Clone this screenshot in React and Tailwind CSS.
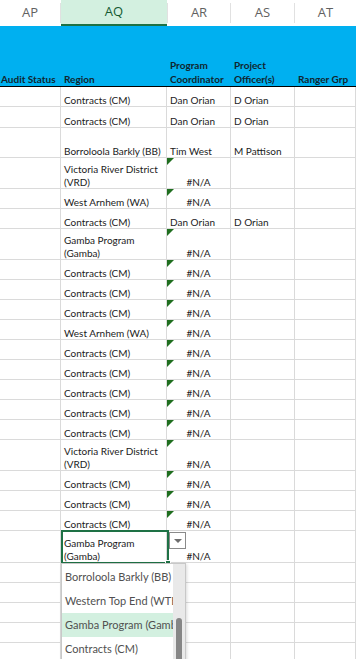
import React from 'react';

const grid = 'grid grid-cols-[61px_106px_64px_64px_61px]';

// rows of the sheet: h = row height incl. bottom gridline
const rows = [
  { h: 20, region: ['Contracts (CM)'], coord: 'Dan Orian', officer: 'D Orian' },
  { h: 21, region: ['Contracts (CM)'], coord: 'Dan Orian', officer: 'D Orian' },
  { h: 30, region: ['Borroloola Barkly (BB)'], coord: 'Tim West', officer: 'M Pattison' },
  { h: 31, region: ['Victoria River District', '(VRD)'], na: true },
  { h: 20, region: ['West Arnhem (WA)'], na: true },
  { h: 20, region: ['Contracts (CM)'], coord: 'Dan Orian', officer: 'D Orian' },
  { h: 31, region: ['Gamba Program', '(Gamba)'], na: true },
  { h: 20, region: ['Contracts (CM)'], na: true },
  { h: 20, region: ['Contracts (CM)'], na: true },
  { h: 20, region: ['Contracts (CM)'], na: true },
  { h: 20, region: ['West Arnhem (WA)'], na: true },
  { h: 20, region: ['Contracts (CM)'], na: true },
  { h: 20, region: ['Contracts (CM)'], na: true },
  { h: 20, region: ['Contracts (CM)'], na: true },
  { h: 20, region: ['Contracts (CM)'], na: true },
  { h: 20, region: ['Contracts (CM)'], na: true },
  { h: 31, region: ['Victoria River District', '(VRD)'], na: true },
  { h: 20, region: ['Contracts (CM)'], na: true },
  { h: 20, region: ['Contracts (CM)'], na: true },
  { h: 20, region: ['Contracts (CM)'], na: true },
  { h: 32, region: ['Gamba Program', '(Gamba)'], na: true, noFlag: true },
  { h: 20 }, { h: 20 }, { h: 20 }, { h: 20 }, { h: 20 },
];

const options = ['Borroloola Barkly (BB)', 'Western Top End (WTE)', 'Gamba Program (Gamba)', 'Contracts (CM)'];

const cell = 'relative border-r border-b border-[#dadada] flex flex-col justify-end px-[3px] pb-0 overflow-hidden whitespace-nowrap';

const Row = ({ r }) => (
  <div className={grid} style={{ height: r.h }}>
    <div className={cell} />
    <div className={cell}>
      {(r.region || []).map((t) => (
        <span key={t} className="leading-[13px] translate-y-[1px]">{t}</span>
      ))}
    </div>
    <div className={cell}>
      {r.na && !r.noFlag && (
        <span className="absolute top-0 left-0 w-0 h-0 border-t-[7px] border-r-[7px] border-t-[#1f6e1f] border-r-transparent" />
      )}
      <span className={`leading-[13px] translate-y-[1px] ${r.na ? 'text-center' : ''}`}>{r.na ? '#N/A' : r.coord}</span>
    </div>
    <div className={cell}>
      <span className="leading-[13px] translate-y-[1px]">{r.officer}</span>
    </div>
    <div className={cell} />
  </div>
);

export default function App() {
  return (
    <div className="relative w-[356px] h-[659px] overflow-hidden bg-white text-[10px] text-[#1b1b1b] font-['Lato',sans-serif]">
      {/* column letters */}
      <div className={`${grid} h-[26px] text-[13px] text-[#616161] font-['Open_Sans',sans-serif]`}>
        <div className="flex items-center justify-center border-r border-[#e1e1e1] my-[3px]">AP</div>
        <div className="flex items-center justify-center bg-[#d3f0e0] text-[#145a32] border-b-2 border-[#1e7145]">AQ</div>
        <div className="flex items-center justify-center border-r border-l border-[#e1e1e1] my-[3px]">AR</div>
        <div className="flex items-center justify-center border-r border-[#e1e1e1] my-[3px]">AS</div>
        <div className="flex items-center justify-center my-[3px]">AT</div>
      </div>

      {/* blue header row */}
      <div className={`${grid} h-[61px] bg-[#00b0f0] border-b border-[#000] font-bold text-[#10252e] whitespace-nowrap`}>
        <div className="flex flex-col justify-end pl-px leading-[14px]">Audit Status</div>
        <div className="flex flex-col justify-end px-[3px] leading-[14px]">Region</div>
        <div className="flex flex-col justify-end px-[3px] leading-[14px]">
          <span>Program</span>
          <span>Coordinator</span>
        </div>
        <div className="flex flex-col justify-end px-[3px] leading-[14px]">
          <span>Project</span>
          <span>Officer(s)</span>
        </div>
        <div className="flex flex-col justify-end px-[3px] leading-[14px]">Ranger Grp</div>
      </div>

      {rows.map((r, i) => (
        <Row key={i} r={r} />
      ))}

      {/* active cell */}
      <div className="absolute left-[61px] top-[530px] w-[108px] h-[34px] border-2 border-[#1e7145] pointer-events-none">
        <span className="absolute -right-[4px] -bottom-[4px] w-[6px] h-[6px] bg-[#1e7145] border border-white" />
      </div>

      {/* dropdown arrow button */}
      <div className="absolute left-[169px] top-[532px] w-[17px] h-[17px] bg-white border border-[#8a8a8a] flex items-center justify-center">
        <span className="w-0 h-0 border-l-[4px] border-r-[4px] border-t-[4px] border-l-transparent border-r-transparent border-t-[#6e6e6e]" />
      </div>

      {/* validation list */}
      <div className="absolute left-[61px] top-[563px] w-[125px] h-[110px] bg-white border border-[#c8c8c8] shadow-[1px_1px_3px_rgba(0,0,0,0.15)] flex">
        <div className="flex-1 overflow-hidden pt-[1px]">
          {options.map((o, i) => (
            <div
              key={o}
              className={`h-[24px] flex items-center px-[3px] whitespace-nowrap text-[11px] text-[#505050] ${i === 2 ? 'bg-[#d3f0e0]' : ''}`}
            >
              {o}
            </div>
          ))}
        </div>
        <div className="w-[12px] bg-[#e9e9e9] flex justify-center pt-[54px]">
          <div className="w-[6px] h-[60px] rounded-t-full bg-[#868686]" />
        </div>
      </div>
    </div>
  );
}
